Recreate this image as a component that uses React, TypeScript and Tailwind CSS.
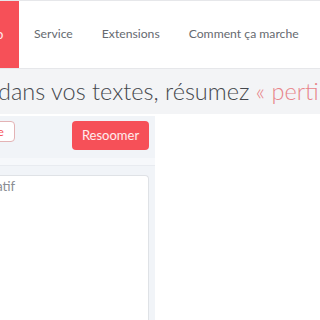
export default function App() {
  return (
    <div className="h-[320px] w-[320px] overflow-hidden bg-white font-['Lato',sans-serif]">
      <header className="flex h-[69px] border-t border-b border-[#e6e7ea] bg-white">
        <div className="flex w-[19px] shrink-0 items-center overflow-hidden bg-[#f65058]">
          <span className="-ml-[4px] text-[13px] text-white/90">o</span>
        </div>
        <nav className="flex items-center gap-[29px] pl-[15px] text-[12.2px] text-[#666a70] whitespace-nowrap">
          <a>Service</a>
          <a>Extensions</a>
          <a>Comment ça marche</a>
        </nav>
      </header>

      <div className="flex h-[45px] items-center overflow-hidden bg-[#f3f4f6] whitespace-nowrap text-[23.5px] font-light text-[#45484d]">
        <span className="-ml-[2px]">
          dans vos textes, résumez <span className="text-[#e8858a]">« pertinents »</span>
        </span>
      </div>

      <div className="flex pt-[2px]">
        <div className="h-[210px] w-[155px] bg-[#f1f4f8] pt-[4px]">
          <div className="flex items-start justify-between overflow-hidden pr-[6px] pt-[1px]">
            <button className="-ml-[52px] h-[21px] rounded-[4px] border border-[#e3b3b5] bg-white px-[10px] text-[12px] leading-none text-[#f65058]">
              Exemple
            </button>
            <button className="h-[29px] w-[77px] rounded-[4px] bg-[#f65058] text-[13px] text-white/90">
              Resoomer
            </button>
          </div>
          <div className="mt-[8px] h-[8px] border-b border-[#e8ebf0] bg-[#f6f8fb]" />
          <div className="mt-[9px] mr-[6px] h-[160px] overflow-hidden rounded-tr-[4px] border-t border-r border-[#dfe2e6] bg-white">
            <div className="-ml-[61px] whitespace-nowrap pt-[1px] text-[13px] text-[#8a8d92]">Texte narratif</div>
          </div>
        </div>
        <div className="flex-1 bg-white" />
      </div>
    </div>
  );
}
